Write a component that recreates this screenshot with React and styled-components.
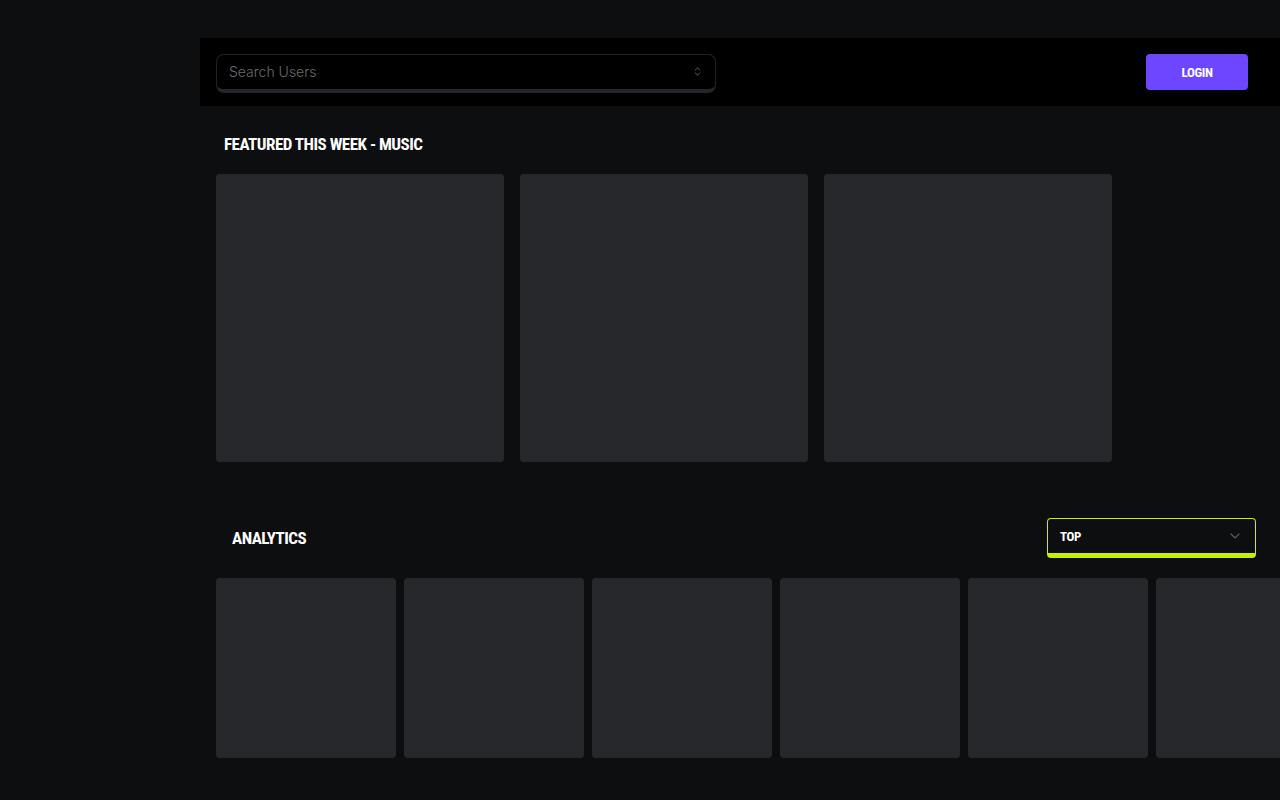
import React from "react";
import styled, { createGlobalStyle } from "styled-components";
import { ChevronsUpDown, ChevronDown } from "lucide-react";

const GlobalStyle = createGlobalStyle`
  html, body {
    margin: 0;
    padding: 0;
    background: #0d0e10;
    overflow: hidden;
  }
  * { box-sizing: border-box; }
`;

const condensed = `"Liberation Sans Narrow", "Roboto Condensed", "Liberation Sans", sans-serif`;

const Layout = styled.div`
  display: grid;
  grid-template-columns: 200px 1fr;
  width: 1280px;
  height: 800px;
  overflow: hidden;
`;

const Sidebar = styled.aside`
  background: #0d0e10;
`;

const Main = styled.main`
  padding-top: 38px;
  min-width: 0;
  overflow: hidden;
`;

const Header = styled.header`
  height: 68px;
  background: #000;
  display: flex;
  align-items: center;
  justify-content: space-between;
  padding: 0 32px 0 16px;
`;

const Search = styled.div`
  width: 500px;
  height: 39px;
  margin-top: 3px;
  border: 1px solid #202125;
  border-bottom-width: 4px;
  border-bottom-color: #25262b;
  border-radius: 8px;
  background: #000;
  display: flex;
  align-items: center;
  justify-content: space-between;
  padding: 0 12px 2px;
  color: #6a6b6f;
  font-family: Inter, "Noto Sans", sans-serif;
  font-size: 14px;
  font-weight: 300;
`;

const LoginButton = styled.button`
  width: 102px;
  height: 36px;
  border: none;
  border-radius: 4px;
  background: #6c47ff;
  color: #fff;
  font-family: ${condensed};
  font-weight: 700;
  font-size: 13px;
  letter-spacing: -0.3px;
  cursor: pointer;
`;

const Title = styled.h2`
  margin: 0;
  color: #fff;
  font-family: ${condensed};
  font-weight: 700;
  font-size: 17px;
  letter-spacing: -0.5px;
  line-height: 24px;
  text-transform: uppercase;
`;

const Featured = styled.section`
  padding: 26px 0 0 16px;
  ${Title} { padding-left: 8px; margin-bottom: 18px; }
`;

const CardRow = styled.div`
  display: flex;
  gap: ${p => p.$gap}px;
`;

const Card = styled.div`
  flex: 0 0 ${p => p.$size}px;
  height: ${p => p.$size}px;
  background: #27282c;
  border-radius: 4px;
`;

const Analytics = styled.section`
  padding: 56px 0 0 16px;
`;

const AnalyticsHead = styled.div`
  display: flex;
  align-items: center;
  justify-content: space-between;
  padding: 0 24px 0 16px;
  margin-bottom: 20px;
`;

const Select = styled.div`
  width: 209px;
  height: 40px;
  border: 1px solid #c8f000;
  border-bottom-width: 5px;
  border-radius: 4px;
  background: #0d0e10;
  display: flex;
  align-items: center;
  justify-content: space-between;
  padding: 0 12px;
  color: #fff;
  font-family: ${condensed};
  font-weight: 700;
  font-size: 13px;
  letter-spacing: -0.3px;
`;

export default function App() {
  return (
    <>
      <GlobalStyle />
      <Layout>
        <Sidebar />
        <Main>
          <Header>
            <Search>
              <span>Search Users</span>
              <ChevronsUpDown size={11} color="#6a6b6f" strokeWidth={2} />
            </Search>
            <LoginButton>LOGIN</LoginButton>
          </Header>

          <Featured>
            <Title>Featured this week - Music</Title>
            <CardRow $gap={16}>
              {[0, 1, 2].map(i => <Card key={i} $size={288} />)}
            </CardRow>
          </Featured>

          <Analytics>
            <AnalyticsHead>
              <Title>Analytics</Title>
              <Select>
                <span>TOP</span>
                <ChevronDown size={16} color="#5a5b60" strokeWidth={1.75} />
              </Select>
            </AnalyticsHead>
            <CardRow $gap={8}>
              {[0, 1, 2, 3, 4, 5, 6].map(i => <Card key={i} $size={180} />)}
            </CardRow>
          </Analytics>
        </Main>
      </Layout>
    </>
  );
}
